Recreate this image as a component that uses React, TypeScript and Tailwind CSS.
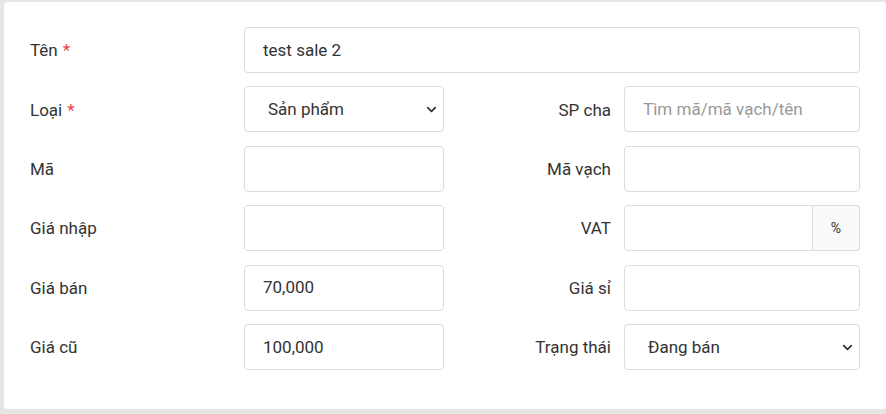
import { ChevronDown } from "lucide-react";

const font = { fontFamily: "Roboto, 'Noto Sans', sans-serif" };

function Label({ text, required, right }: { text: string; required?: boolean; right?: boolean }) {
  return (
    <div className={`flex h-full items-center pt-[2px] text-[17px] text-[#333] ${right ? "justify-end pr-[13px]" : ""}`}>
      {text}
      {required && <span className="ml-[5px] text-[#f0404a]">*</span>}
    </div>
  );
}

function TextBox({ value, placeholder }: { value?: string; placeholder?: string }) {
  return (
    <div className="flex h-full items-center rounded-[4px] border border-[#dcdcdc] bg-white pl-[18px] pt-[1px] text-[17px]">
      {value ? <span className="text-[#333]">{value}</span> : <span className="text-[#999]">{placeholder}</span>}
    </div>
  );
}

function SelectBox({ value }: { value: string }) {
  return (
    <div className="flex h-full items-center justify-between rounded-[4px] border border-[#dcdcdc] bg-white pl-[23px] pr-[4px] pt-[1px] text-[17px] text-[#333]">
      <span>{value}</span>
      <ChevronDown className="h-[15px] w-[15px] text-[#333]" strokeWidth={2.8} />
    </div>
  );
}

type Row = {
  left: string;
  leftReq?: boolean;
  leftField: React.ReactNode;
  right: string;
  rightField: React.ReactNode;
};

const rows: Row[] = [
  { left: "Loại", leftReq: true, leftField: <SelectBox value="Sản phẩm" />, right: "SP cha", rightField: <TextBox placeholder="Tìm mã/mã vạch/tên" /> },
  { left: "Mã", leftField: <TextBox />, right: "Mã vạch", rightField: <TextBox /> },
  {
    left: "Giá nhập",
    leftField: <TextBox />,
    right: "VAT",
    rightField: (
      <div className="flex h-full">
        <div className="h-full flex-1 rounded-l-[4px] border border-[#dcdcdc] bg-white" />
        <div className="flex h-full w-[47px] items-center justify-center rounded-r-[4px] border border-l-0 border-[#dcdcdc] bg-[#f9f9f9] text-[14px] text-[#333]">
          %
        </div>
      </div>
    ),
  },
  { left: "Giá bán", leftField: <TextBox value="70,000" />, right: "Giá sỉ", rightField: <TextBox /> },
  { left: "Giá cũ", leftField: <TextBox value="100,000" />, right: "Trạng thái", rightField: <SelectBox value="Đang bán" /> },
];

export default function App() {
  return (
    <div className="h-[414px] w-[886px] overflow-hidden bg-[#e6e6e6] pl-[4px] pt-[2px]" style={font}>
      <div className="flex h-[407px] flex-col gap-[13.4px] rounded-[3px] bg-white pl-[26px] pr-[26px] pt-[25px]">
        <div className="grid h-[46px] grid-cols-[214px_1fr]">
          <Label text="Tên" required />
          <TextBox value="test sale 2" />
        </div>
        {rows.map((r) => (
          <div key={r.left} className="grid h-[46px] grid-cols-[214px_200px_180px_236px]">
            <Label text={r.left} required={r.leftReq} />
            {r.leftField}
            <Label text={r.right} right />
            {r.rightField}
          </div>
        ))}
      </div>
    </div>
  );
}
